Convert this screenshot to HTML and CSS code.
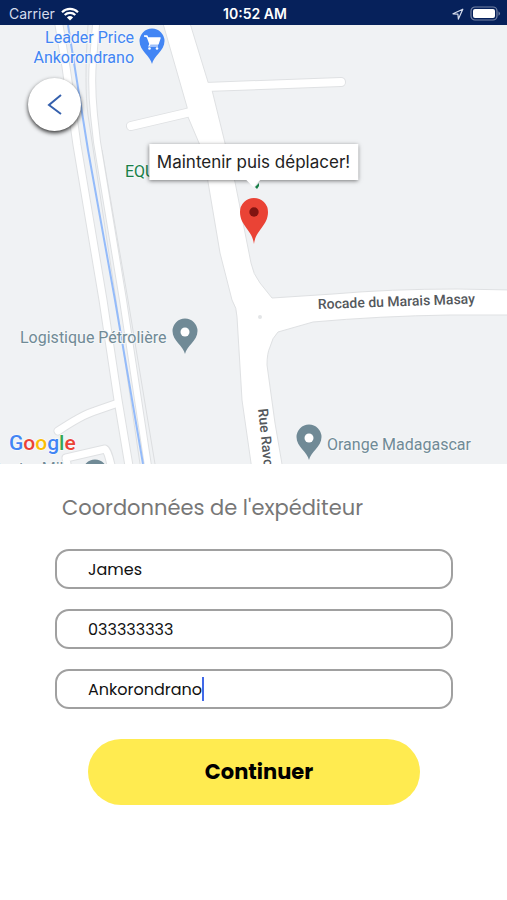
FILE: index.html
```html
<!DOCTYPE html>
<html lang="fr">
<head>
    <meta charset="UTF-8">
    <meta name="viewport" content="width=device-width, initial-scale=1.0">
    <title>Coordonnées de l'expéditeur</title>
    <link rel="stylesheet" href="styles.css">
</head>
<body>
    <header class="status-bar">
        <div class="status-left">
            <span>Carrier</span>
            <svg width="18" height="14" viewBox="0 0 18 14" aria-hidden="true">
                <path d="M1 5.2a11.5 11.5 0 0 1 16 0M3.7 8a7.6 7.6 0 0 1 10.6 0" fill="none" stroke="#fff" stroke-width="2.2"/>
                <path d="M9 13.6 5.9 10.4a4.5 4.5 0 0 1 6.2 0z" fill="#fff"/>
            </svg>
        </div>
        <time class="status-time">10:52 AM</time>
        <div class="status-right">
            <svg width="12" height="12" viewBox="0 0 12 12" aria-hidden="true">
                <path d="M10.8 1.2 1 5.8l4.9.4.5 4.9z" fill="none" stroke="#d5dcec" stroke-width="1.2" stroke-linejoin="round"/>
            </svg>
            <svg width="31" height="15" viewBox="0 0 31 15" aria-hidden="true">
                <rect x="1" y="1" width="26" height="13" rx="4" fill="none" stroke="#7583a5" stroke-width="1.2"/>
                <rect x="3" y="3" width="22" height="9" rx="2" fill="#fff"/>
                <path d="M28.5 5.2q3 2.3 0 4.6z" fill="#7583a5"/>
            </svg>
        </div>
    </header>

    <section class="map">
        <svg class="map-canvas" viewBox="0 25 507 439" role="img" aria-label="Carte">
            <defs>
                <path id="pin" d="M0 22C-1.5 14-12.500 9-12.500-1A12.500 12.500 0 0 1 12.500-1C12.500 9 1.500 14 0 22z"/>
            </defs>

            <!-- canal and its two side roads -->
            <g class="road-edge">
                <path d="M59 25 66 67 77 145 103 300 118 400 129 466" stroke-width="9"/>
                <path d="M96 25 93 60Q91 85 94 115L97 142 123 300 148 466" stroke-width="8"/>
                <path d="M341 82 205 87M131 126 195 111" stroke-width="10"/>
                <path d="M58 431Q82 415 95 411L118 403" stroke-width="9"/>
                <path d="M68 470 66 458 105 449Q108 450 112 470" stroke-width="9"/>
            </g>
            <path class="rail" d="M102 150 128 300 155 464M88 25Q84 85 88 115L116 300 140 464"/>
            <path class="main-road" d="M162 20 187 107 188 117 199 143Q206 165 208 182L220 253 232 300Q237 308 237 317L242 400 252 470H283L275 423 267 365Q267 353 270 347 272 338 278 332L313 322Q380 316 450 315H512V290L457 289Q390 289 333 294L272 298 260 283Q253 274 251 263L235 182 225 143 212 90 208 82 189 20z"/>
            <g class="road">
                <path d="M59 25 66 67 77 145 103 300 118 400 129 466" stroke-width="7"/>
                <path d="M96 25 93 60Q91 85 94 115L97 142 123 300 148 466" stroke-width="6"/>
                <path d="M341 82 205 87M131 126 195 111" stroke-width="8"/>
                <path d="M58 431Q82 415 95 411L118 403" stroke-width="7"/>
                <path d="M68 470 66 458 105 449Q108 450 112 470" stroke-width="7"/>
            </g>
            <path class="canal" d="M68 25 80 100 88 150 115 300 143 464"/>
            <circle cx="260" cy="317" r="2" fill="#e3e5e7"/>

            <g class="place shop">
                <text x="134" y="43" text-anchor="end">Leader Price</text>
                <text x="134" y="63" text-anchor="end">Ankorondrano</text>
                <use href="#pin" x="152" y="42"/>
                <path d="M144 36h3l3 8h8l2-6h-12" fill="#fff" stroke="#fff" stroke-width="1.400" stroke-linejoin="round"/>
                <path d="M150 44l-1 2h9" fill="none" stroke="#fff" stroke-width="1.200"/>
                <circle cx="149.500" cy="48.500" r="1.300" fill="#fff"/>
                <circle cx="157" cy="48.500" r="1.300" fill="#fff"/>
            </g>

            <g class="place green">
                <text x="125" y="177">EQU</text>
                <path d="M255 187 259 183V186L257 189z"/>
            </g>

            <g class="place">
                <text x="20" y="343">Logistique Pétrolière</text>
                <use href="#pin" x="185" y="332"/>
                <circle cx="185" cy="332" r="4.500" fill="#fff"/>
                <text x="327" y="450">Orange Madagascar</text>
                <use href="#pin" x="309" y="438"/>
                <circle cx="309" cy="438" r="4.500" fill="#fff"/>
                <text x="-9" y="474">Centre Mil</text>
                <use href="#pin" x="95" y="473"/>
            </g>

            <g class="street">
                <text transform="translate(318 309) rotate(-2)">Rocade du Marais Masay</text>
                <text transform="translate(258 409) rotate(84)">Rue Ravo</text>
            </g>

            <text class="google" x="9" y="450"><tspan fill="#4285f4">G</tspan><tspan fill="#ea4335">o</tspan><tspan fill="#fbbc05">o</tspan><tspan fill="#4285f4">g</tspan><tspan fill="#34a853">l</tspan><tspan fill="#ea4335">e</tspan></text>

            <path d="M254 244C252.500 230 240 226 240 212A14 14 0 0 1 268 212C268 226 255.500 230 254 244z" fill="#ea4335"/>
            <circle cx="254" cy="212" r="4.700" fill="#811411"/>
        </svg>

        <div class="callout">Maintenir puis déplacer!</div>

        <button class="back" type="button" aria-label="Retour">
            <svg width="16" height="22" viewBox="0 0 16 22" aria-hidden="true">
                <path d="M14 1 2 11l12 9" fill="none" stroke="#3560ad" stroke-width="2"/>
            </svg>
        </button>
    </section>

    <form class="sender">
        <h1>Coordonnées de l'expéditeur</h1>
        <div class="fields">
            <div class="field">
                <input type="text" value="James" aria-label="Nom">
            </div>
            <div class="field">
                <input type="tel" value="033333333" aria-label="Téléphone">
            </div>
            <div class="field active">
                <input type="text" value="Ankorondrano" aria-label="Adresse">
                <span class="caret"></span>
            </div>
        </div>
        <button class="submit" type="button">Continuer</button>
    </form>
</body>
</html>
```

FILE: styles.css
```css
* {
    box-sizing: border-box;
}

body {
    margin: 0;
    background-color: #fff;
    color: #111;
    font-family: Poppins, Inter, sans-serif;
}

.status-bar {
    display: grid;
    grid-template-columns: 1fr auto 1fr;
    align-items: center;
    height: 25px;
    padding: 2px 6px 0 9px;
    background-color: #06215b;
    color: #fff;
    font-family: Inter, sans-serif;
    font-size: 14px;
}

.status-left,
.status-right {
    display: flex;
    align-items: center;
    gap: 6px;
}

.status-left {
    color: #d5dcec;
}

.status-right {
    justify-content: flex-end;
}

.status-time {
    font-weight: 600;
}

/* Map */
.map {
    position: relative;
    overflow: hidden;
    background-color: #f0f2f4;
    font-family: Roboto, sans-serif;
}

.map-canvas {
    display: block;
    width: 100%;
}

.road-edge,
.road {
    fill: none;
    stroke: #dfe1e3;
    stroke-linecap: round;
    stroke-linejoin: round;
}

.road {
    stroke: #fff;
}

.main-road {
    fill: #fff;
    stroke: #dfe1e3;
}

.rail {
    fill: none;
    stroke: #dcdee0;
}

.canal {
    fill: none;
    stroke: #94bbfa;
    stroke-width: 2;
}

.place {
    fill: #708a96;
    font-size: 16px;
}

.place text {
    paint-order: stroke;
    stroke: #f5f7f8;
    stroke-width: 2px;
}

.shop {
    fill: #4285f4;
}

.green {
    fill: #188048;
}

.street {
    fill: #54585c;
    font-size: 14px;
    font-weight: 500;
}

.google {
    font-size: 21px;
    font-weight: 500;
    paint-order: stroke;
    stroke: #fff;
    stroke-width: 1px;
}

.callout {
    position: absolute;
    top: 27%;
    left: 50%;
    padding: 6px 8px;
    background-color: #fff;
    box-shadow: 0 1px 4px rgba(0, 0, 0, 0.5);
    color: #222;
    font-family: Inter, sans-serif;
    font-size: 17px;
    line-height: 24px;
    white-space: nowrap;
    transform: translateX(-50%);
}

.callout::after {
    content: "";
    position: absolute;
    top: 100%;
    left: 50%;
    border: 7px solid transparent;
    border-top-color: #fff;
    border-bottom-width: 0;
    transform: translateX(-50%);
}

.back {
    position: absolute;
    top: 53px;
    left: 28px;
    display: flex;
    align-items: center;
    justify-content: center;
    width: 53px;
    height: 53px;
    padding: 0;
    border: none;
    border-radius: 50%;
    background-color: #fff;
    box-shadow: 0 2px 4px rgba(0, 0, 0, 0.8);
    cursor: pointer;
}

/* Sender form */
.sender {
    padding: 28px 54px 28px 55px;
}

h1 {
    margin: 0 7px 25px;
    color: #777;
    font-size: 21px;
    font-weight: 400;
    line-height: 32px;
}

.fields {
    display: flex;
    flex-direction: column;
    gap: 20px;
}

.field {
    display: flex;
    align-items: center;
    height: 40px;
    padding: 0 31px;
    border: 2px solid #a0a0a0;
    border-radius: 14px;
}

.field input {
    flex: 1;
    min-width: 0;
    padding: 0;
    border: none;
    outline: none;
    background: none;
    color: #111;
    font: inherit;
    font-size: 16px;
}

.field.active input {
    flex: none;
    field-sizing: content;
}

.caret {
    width: 2px;
    height: 24px;
    background-color: #4169e8;
}

.submit {
    display: block;
    width: calc(100% - 66px);
    height: 66px;
    margin: 30px auto 0;
    padding: 0 0 2px 10px;
    border: none;
    border-radius: 33px;
    background-color: #ffeb50;
    color: #000;
    font: inherit;
    font-size: 21px;
    font-weight: 700;
    cursor: pointer;
}
```
